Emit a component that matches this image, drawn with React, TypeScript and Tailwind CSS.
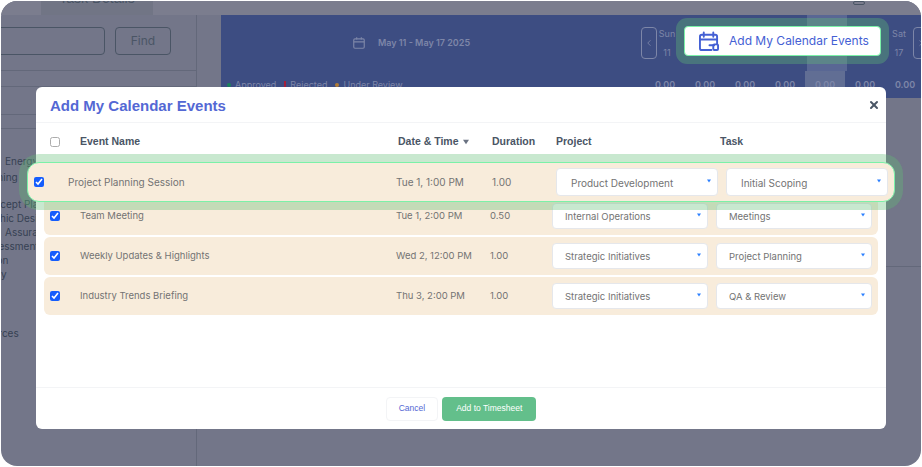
import React from 'react';
import { ChevronLeft, ChevronRight, X } from 'lucide-react';

const DAYS = [
  { name: 'Sun', date: '11' },
  { name: 'Mon', date: '12' },
  { name: 'Tue', date: '13' },
  { name: 'Wed', date: '14' },
  { name: 'Thu', date: '15' },
  { name: 'Fri', date: '16' },
  { name: 'Sat', date: '17' },
];

const EVENTS = [
  { name: 'Team Meeting', date: 'Tue 1, 2:00 PM', duration: '0.50', project: 'Internal Operations', task: 'Meetings' },
  { name: 'Weekly Updates & Highlights', date: 'Wed 2, 12:00 PM', duration: '1.00', project: 'Strategic Initiatives', task: 'Project Planning' },
  { name: 'Industry Trends Briefing', date: 'Thu 3, 2:00 PM', duration: '1.00', project: 'Strategic Initiatives', task: 'QA & Review' },
];

const CalendarPlus: React.FC<{ className?: string }> = ({ className }) => (
  <svg viewBox="2 1 21 21" fill="none" stroke="currentColor" strokeWidth="2" strokeLinecap="round" strokeLinejoin="round" className={className}>
    <path d="M21 15V7a2 2 0 0 0-2-2H5a2 2 0 0 0-2 2v12a2 2 0 0 0 2 2h10" />
    <path d="M7 2.5V7M17 2.5V7M3 10h18" />
    <path d="M13 16h5" />
    <rect x="17" y="15" width="5" height="6" rx="1" />
  </svg>
);

const Select: React.FC<{ value: string; big?: boolean }> = ({ value, big }) => (
  <div className={`flex flex-1 items-center justify-between rounded border border-gray-200 bg-white pt-0.5 pr-1.5 text-neutral-500 ${big ? 'h-7 pl-3.5 text-[10px]' : 'h-6.5 pl-3 text-[9.5px]'}`}>
    <span>{value}</span>
    <svg viewBox="0 0 8 6" className="mb-1 h-1 w-1 fill-blue-500">
      <path d="M0 0h8L4 6z" />
    </svg>
  </div>
);

const Sidebar: React.FC = () => (
  <div className="flex w-[196px] shrink-0 flex-col border-r border-gray-600/40">
    <div className="flex gap-2.5 pt-3">
      <div className="-ml-2 h-7 w-28 rounded border border-gray-600" />
      <div className="flex h-7 w-14 items-center justify-center rounded border border-gray-600 text-xs text-gray-600">Find</div>
    </div>
    <div className="mt-3 h-1 border-b border-gray-600/40" />
    <div className="h-4 border-b border-gray-600/40" />
    <div className="h-7 border-b border-gray-600/40" />
    <div className="h-3.5 border-b border-gray-600/40" />
    <div className="mt-6 flex flex-col text-[10px] leading-4 text-gray-700">
      <span className="ml-1">Energy</span>
      <span className="-ml-6">Planning</span>
      <span className="-ml-5 mt-3 leading-3.5">Concept Plan</span>
      <span className="-ml-6 leading-3.5">Graphic Design</span>
      <span className="ml-1 leading-3.5">Assurance</span>
      <span className="-ml-5 leading-3.5">Assessment</span>
      <span className="-ml-6 leading-3.5">Option</span>
      <span className="-ml-4 leading-3.5">Only</span>
      <span className="-ml-8 mt-11">Resources</span>
    </div>
  </div>
);

const Timesheet: React.FC = () => (
  <div className="ml-6 flex flex-1 flex-col overflow-hidden">
    <div className="flex h-[83px] flex-col bg-[#3d4d82] text-[#7d86a8]">
      <div className="-mr-2 flex h-14 items-center">
        <div className="flex flex-1 items-center justify-center gap-3 pr-10 text-[9px] font-semibold">
          <svg viewBox="0 0 24 24" fill="none" stroke="currentColor" strokeWidth="2" className="h-3.5 w-3.5">
            <rect x="3" y="5" width="18" height="16" rx="2" />
            <path d="M8 2v4M16 2v4M3 10h18" />
          </svg>
          <span>May 11 - May 17 2025</span>
        </div>
        <div className="flex h-8 w-4 shrink-0 items-center justify-center rounded border border-[#7d86a8]">
          <ChevronLeft size={10} />
        </div>
        <div className="-ml-2.5 flex h-full shrink-0">
          {DAYS.map((day, i) => (
            <div
              key={day.name}
              className={`flex w-10 flex-col items-center justify-center gap-1.5 text-[9px] ${i === 4 ? 'bg-white/15' : ''} ${i === 6 ? '-ml-2' : ''}`}
            >
              <span>{day.name}</span>
              <span>{day.date}</span>
            </div>
          ))}
        </div>
        <div className="-ml-1.5 flex h-8 w-4 shrink-0 items-center justify-center rounded border border-[#7d86a8]">
          <ChevronRight size={10} />
        </div>
      </div>
      <div className="-mr-1 flex flex-1">
        <div className="flex flex-1 items-start gap-2 pl-1.5 pt-2 text-[9px] leading-3">
          <span className="flex items-center gap-1"><i className="h-1 w-1 rounded-full bg-green-600 opacity-60" />Approved</span>
          <span className="flex items-center gap-1"><i className="h-2 w-0.5 bg-red-600 opacity-60" />Rejected</span>
          <span className="flex items-center gap-1"><i className="h-1 w-1 rounded-full bg-amber-500 opacity-60" />Under Review</span>
        </div>
        <div className="flex shrink-0">
          {DAYS.map((day, i) => (
            <div key={day.name} className={`flex w-10 justify-center pt-2 text-[9px] font-semibold leading-3 ${i === 4 ? 'bg-gray-400/40' : ''}`}>0.00</div>
          ))}
        </div>
      </div>
    </div>
    <div className="h-[169px] border-b border-gray-600/40" />
  </div>
);

export default function App() {
  return (
    <div className="relative h-screen w-screen bg-white p-px font-['Inter',sans-serif]">
      <div className="flex h-full flex-col overflow-hidden rounded-2xl bg-[#737689]">
        <div className="flex h-3.5 shrink-0 justify-between bg-[#7b7d8e] pl-10 pr-14">
          <div className="h-full w-28 overflow-hidden bg-gray-600/20 text-center font-['Liberation_Sans',sans-serif] text-sm leading-none text-gray-600">
            <div className="-mt-2.5">Task Details</div>
          </div>
          <div className="h-1 w-3 rounded-sm border border-gray-600" />
        </div>
        <div className="flex flex-1">
          <Sidebar />
          <Timesheet />
        </div>
      </div>

      {/* Modal */}
      <div className="absolute left-9 top-[87px] flex h-[342px] w-[850px] flex-col rounded-md bg-white">
        <div className="flex h-9 shrink-0 items-center justify-between border-b border-gray-100 pl-3.5 pr-1.5 pt-1">
          <h2 className="font-['Liberation_Sans',sans-serif] text-[15px] font-bold text-[#5468d4]">Add My Calendar Events</h2>
          <X size={12} strokeWidth={4} className="mb-1 text-gray-600" />
        </div>
        <div className="flex h-8 shrink-0 items-center pl-3.5 pr-2.5 pt-1.5 font-['Liberation_Sans',sans-serif] text-[10.5px] font-bold text-gray-600">
          <input type="checkbox" readOnly className="h-2.5 w-2.5 opacity-60" />
          <span className="ml-5 flex-1">Event Name</span>
          <span className="flex w-24 items-center gap-1">
            Date &amp; Time
            <svg viewBox="0 0 8 6" className="h-1.5 w-1.5 fill-gray-500"><path d="M0 0h8L4 6z" /></svg>
          </span>
          <span className="-ml-0.5 w-16">Duration</span>
          <span className="w-40">Project</span>
          <span className="w-40 pl-1">Task</span>
        </div>
        <div className="mt-0.5 flex flex-col gap-0.5 px-2">
          <div className="h-9.5" />
          {EVENTS.map((event) => (
            <div key={event.name} className="flex h-9.5 items-center rounded-md bg-[#f8ecdb] px-1.5 text-[9.5px] text-neutral-500">
              <input type="checkbox" checked readOnly className="h-2.5 w-2.5 accent-blue-600" />
              <span className="ml-5 flex-1">{event.name}</span>
              <span className="w-24 pl-1">{event.date}</span>
              <span className="w-16 pl-0.5">{event.duration}</span>
              <div className="flex w-80 gap-2">
                <Select value={event.project} />
                <Select value={event.task} />
              </div>
            </div>
          ))}
        </div>
        <div className="mt-auto flex h-[42px] items-center justify-center gap-1 border-t border-gray-100 font-['Liberation_Sans',sans-serif] text-[8.5px]">
          <button className="h-6 rounded border border-gray-100 px-3 text-[#5468d4]">Cancel</button>
          <button className="h-6 rounded bg-[#63bf8b] px-3.5 text-white">Add to Timesheet</button>
        </div>
      </div>

      {/* Highlighted row */}
      <div className="absolute left-[27px] top-[162px] flex h-10 w-[868px] items-center rounded-xl border border-green-300 bg-[#f8ecdb] pl-1.5 pr-1.5 text-[10px] text-neutral-500 ring-8 ring-[#62bd76]/35">
        <input type="checkbox" checked readOnly className="h-2.5 w-2.5 accent-blue-600" />
        <span className="ml-6 flex-1">Project Planning Session</span>
        <span className="w-24">Tue 1, 1:00 PM</span>
        <span className="w-16">1.00</span>
        <div className="flex w-[332px] gap-2">
          <Select value="Product Development" big />
          <Select value="Initial Scoping" big />
        </div>
      </div>

      {/* Highlighted button */}
      <div className="absolute left-[684px] top-[26px] flex h-[30px] w-[197px] items-center gap-2.5 rounded border border-green-300 bg-white pl-3.5 text-xs text-[#4460d4] ring-8 ring-[#62bd76]/35">
        <CalendarPlus className="h-5 w-5" />
        <span>Add My Calendar Events</span>
      </div>
    </div>
  );
}
